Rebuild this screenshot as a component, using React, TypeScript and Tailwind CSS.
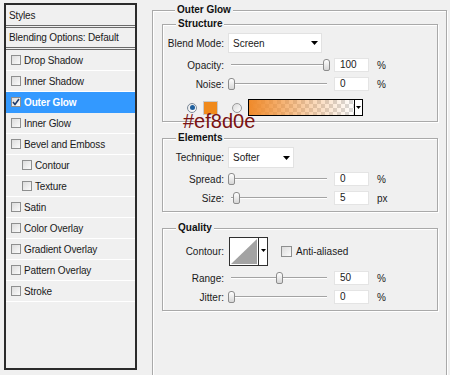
import React from "react";

const items = [
  { label: "Drop Shadow" },
  { label: "Inner Shadow" },
  { label: "Outer Glow", checked: true, selected: true },
  { label: "Inner Glow" },
  { label: "Bevel and Emboss" },
  { label: "Contour", indent: true },
  { label: "Texture", indent: true },
  { label: "Satin" },
  { label: "Color Overlay" },
  { label: "Gradient Overlay" },
  { label: "Pattern Overlay" },
  { label: "Stroke" },
];

const Check = ({ checked }: { checked?: boolean }) => (
  <span className="flex h-[10px] w-[10px] shrink-0 items-center justify-center border border-[#8e8f8f] bg-gradient-to-br from-[#dcdcdc] to-[#fbfbfb]">
    {checked && (
      <svg width="8" height="8" viewBox="0 0 8 8">
        <path d="M1 4 L3 6.5 L7 1" fill="none" stroke="#1c3a6b" strokeWidth="1.6" />
      </svg>
    )}
  </span>
);

const Arrow = () => (
  <svg width="7" height="4" viewBox="0 0 7 4" className="shrink-0">
    <path d="M0 0 H7 L3.5 4 Z" fill="#000" />
  </svg>
);

const Thumb = ({ pos }: { pos: number }) => (
  <div
    className="absolute top-[0px] h-[12px] w-[7px] rounded-t-[3px] rounded-b-[2px] border border-[#8c8c8c] bg-gradient-to-b from-[#ffffff] to-[#d6d6d6]"
    style={{ left: `${pos * 95}px` }}
  />
);

const Slider = ({ pos }: { pos: number }) => (
  <div className="relative ml-[4px] flex h-[12px] w-[102px] items-center">
    <div className="mx-[3px] h-[2px] flex-1 border-t border-b border-t-[#a3a3a3] border-b-white" />
    <Thumb pos={pos} />
  </div>
);

const Field = ({ value }: { value: string }) => (
  <div className="ml-[4px] flex h-[14px] w-[35px] items-center border border-[#e4e4e4] bg-white pl-[5px] leading-none">
    {value}
  </div>
);

const Label = ({ children }: { children: React.ReactNode }) => (
  <span className="w-[61px] shrink-0 text-right">{children}</span>
);

const SliderRow = ({
  label,
  pos,
  value,
  unit,
  className,
}: {
  label: string;
  pos: number;
  value: string;
  unit: string;
  className: string;
}) => (
  <div className={`flex h-[14px] items-center ${className}`}>
    <Label>{label}</Label>
    <Slider pos={pos} />
    <Field value={value} />
    <span className="ml-[8px]">{unit}</span>
  </div>
);

const Legend = ({ children, ml }: { children: React.ReactNode; ml: string }) => (
  <legend className={`${ml} bg-[#f0f0f0] px-[2px] font-bold leading-[12px] text-[#111]`}>{children}</legend>
);

const box = "border border-[#a9a9a9] shadow-[inset_1px_1px_0_#fff,1px_1px_0_#fff]";

export default function App() {
  return (
    <div className="relative flex h-[375px] w-[450px] overflow-hidden bg-[#f0f0f0] font-['Liberation_Sans',Arial,sans-serif] text-[10px] text-[#1a1a1a]">
      {/* style list */}
      <div className="pl-[4px] pt-[3px]">
        <div className="h-[367px] w-[133px] border-2 border-[#2b2b2b] tracking-[-0.15px]">
          <div className="flex h-[20px] items-center pl-[3px]">Styles</div>
          <div className="border-t-[3px] border-double border-[#6a6a6a]" />
          <div className="flex h-[19px] items-center pl-[3px]">Blending Options: Default</div>
          <div className="border-t-[3px] border-double border-[#6a6a6a]" />
          {items.map((it) => (
            <div
              key={it.label}
              className={`flex h-[21px] items-center gap-[3px] border-b ${
                it.selected ? "border-[#3399ff] bg-[#3399ff] font-bold text-white" : "border-white"
              } ${it.indent ? "pl-[16px]" : "pl-[5px]"}`}
            >
              <Check checked={it.checked} />
              <span>{it.label}</span>
            </div>
          ))}
        </div>
      </div>

      {/* settings */}
      <div className="pl-[15px]">
        <fieldset className={`mt-[4px] h-[380px] w-[295px] pl-[9px] pr-[8px] pt-[2px] ${box}`}>
          <Legend ml="ml-[13px]">Outer Glow</Legend>

          <fieldset className={`pt-[3px] pb-[5px] ${box}`}>
            <Legend ml="ml-[13px]">Structure</Legend>
            <div className="flex h-[20px] items-center">
              <Label>Blend Mode:</Label>
              <div className="ml-[4px] flex h-[20px] w-[94px] items-center justify-between border border-[#e2e2e2] bg-white pl-[4px] pr-[3px]">
                <span>Screen</span>
                <Arrow />
              </div>
            </div>
            <SliderRow label="Opacity:" pos={1} value="100" unit="%" className="mt-[5px]" />
            <SliderRow label="Noise:" pos={0} value="0" unit="%" className="mt-[5px]" />
            <div className="mt-[8px] flex h-[17px] items-center">
              <span className="ml-[24px] flex h-[10px] w-[10px] items-center justify-center rounded-full border border-[#7d8a99] bg-gradient-to-br from-[#e8e8e8] to-white">
                <span className="h-[5px] w-[5px] rounded-full bg-[#1f5f9e]" />
              </span>
              <span className="ml-[6px] h-[14px] w-[15px] border border-[#c9c9c9] bg-[#f08a1c]" />
              <span className="ml-[14px] h-[10px] w-[10px] rounded-full border border-[#9a9a9a] bg-gradient-to-br from-[#dadada] to-white" />
              <div className="ml-[6px] flex h-[17px] w-[115px] border border-black">
                <div className="flex-1 [background:linear-gradient(to_right,#f08a2a,rgba(240,138,42,0.35)_60%,rgba(240,138,42,0)),conic-gradient(#d9d9d9_25%,#fff_0_50%,#d9d9d9_0_75%,#fff_0)_0_0/8px_8px]" />
                <div className="flex w-[8px] items-center justify-center border-l border-black bg-white">
                  <svg width="5" height="3" viewBox="0 0 5 3">
                    <path d="M0 0 H5 L2.5 3 Z" fill="#000" />
                  </svg>
                </div>
              </div>
            </div>
          </fieldset>

          <fieldset className={`mt-[10px] pt-[3px] pb-[6px] ${box}`}>
            <Legend ml="ml-[13px]">Elements</Legend>
            <div className="flex h-[21px] items-center">
              <Label>Technique:</Label>
              <div className="ml-[4px] flex h-[21px] w-[66px] items-center justify-between border border-[#e2e2e2] bg-white pl-[4px] pr-[3px]">
                <span>Softer</span>
                <Arrow />
              </div>
            </div>
            <SliderRow label="Spread:" pos={0} value="0" unit="%" className="mt-[4px]" />
            <SliderRow label="Size:" pos={0.05} value="5" unit="px" className="mt-[5px]" />
          </fieldset>

          <fieldset className={`mt-[10px] pt-[3px] pb-[6px] ${box}`}>
            <Legend ml="ml-[13px]">Quality</Legend>
            <div className="flex h-[29px] items-center">
              <Label>Contour:</Label>
              <div className="ml-[5px] flex h-[29px] w-[39px] border border-[#303030] bg-white">
                <svg width="28" height="27" viewBox="0 0 28 27" className="shrink-0">
                  <polygon points="1,26 27,1 27,26" fill="#a3a3a3" />
                </svg>
                <div className="flex flex-1 justify-center border-l border-[#303030] pt-[11px]">
                  <svg width="5" height="3" viewBox="0 0 5 3">
                    <path d="M0 0 H5 L2.5 3 Z" fill="#000" />
                  </svg>
                </div>
              </div>
              <span className="ml-[13px]">
                <span className="flex h-[11px] w-[11px] border border-[#8e8f8f] bg-gradient-to-br from-[#dcdcdc] to-[#fbfbfb]" />
              </span>
              <span className="ml-[4px]">Anti-aliased</span>
            </div>
            <SliderRow label="Range:" pos={0.5} value="50" unit="%" className="mt-[5px]" />
            <SliderRow label="Jitter:" pos={0} value="0" unit="%" className="mt-[5px]" />
          </fieldset>
        </fieldset>
      </div>

      <div className="absolute left-[183px] top-[113px] text-[20px] leading-[16px] text-[#7a1212]">#ef8d0e</div>
    </div>
  );
}
